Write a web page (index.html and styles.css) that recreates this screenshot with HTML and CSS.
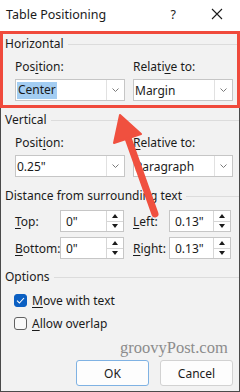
FILE: index.html
```html
<!DOCTYPE html>
<html lang="en">
<head>
  <meta charset="UTF-8">
  <meta name="viewport" content="width=device-width, initial-scale=1.0">
  <title>Table Positioning</title>
  <link rel="stylesheet" href="styles.css">
</head>
<body>
  <div class="dialog">
    <div class="titlebar">
      <span class="title">Table Positioning</span>
      <span class="help">?</span>
      <svg class="close" width="12" height="12" viewBox="0 0 12 12">
        <path d="M1 1 L11 11 M11 1 L1 11" stroke="#1b1b1b" stroke-width="1.1" fill="none"/>
      </svg>
    </div>

    <!-- highlighted section -->
    <div class="group hl">
      <div class="group-title">Horizontal</div>
      <div class="cols">
        <div class="field">
          <div class="label">Pos<u>i</u>tion:</div>
          <div class="combo"><span class="val"><span class="sel">Center</span></span><span class="drop"><svg width="7" height="4" viewBox="0 0 7 4"><path d="M0.5 0.5 L3.5 3.5 L6.5 0.5" stroke="#7a7a7a" fill="none"/></svg></span></div>
        </div>
        <div class="field">
          <div class="label">Relati<u>v</u>e to:</div>
          <div class="combo"><span class="val">Margin</span><span class="drop"><svg width="7" height="4" viewBox="0 0 7 4"><path d="M0.5 0.5 L3.5 3.5 L6.5 0.5" stroke="#7a7a7a" fill="none"/></svg></span></div>
        </div>
      </div>
    </div>

    <div class="group">
      <div class="group-title">Vertical</div>
      <div class="cols">
        <div class="field">
          <div class="label">Posit<u>i</u>on:</div>
          <div class="combo"><span class="val">0.25"</span><span class="drop"><svg width="7" height="4" viewBox="0 0 7 4"><path d="M0.5 0.5 L3.5 3.5 L6.5 0.5" stroke="#7a7a7a" fill="none"/></svg></span></div>
        </div>
        <div class="field">
          <div class="label"><u>R</u>elative to:</div>
          <div class="combo"><span class="val">Paragraph</span><span class="drop"><svg width="7" height="4" viewBox="0 0 7 4"><path d="M0.5 0.5 L3.5 3.5 L6.5 0.5" stroke="#7a7a7a" fill="none"/></svg></span></div>
        </div>
      </div>
    </div>

    <div class="group dist">
      <div class="group-title">Distance from surrounding text</div>
      <div class="spin-grid">
        <div class="spin-cell wide"><span class="slabel"><u>T</u>op:</span><div class="spin"><span class="val">0"</span><span class="arrows"><i class="up"></i><i class="down"></i></span></div></div>
        <div class="spin-cell"><span class="slabel"><u>L</u>eft:</span><div class="spin"><span class="val">0.13"</span><span class="arrows"><i class="up"></i><i class="down"></i></span></div></div>
        <div class="spin-cell wide"><span class="slabel"><u>B</u>ottom:</span><div class="spin"><span class="val">0"</span><span class="arrows"><i class="up"></i><i class="down"></i></span></div></div>
        <div class="spin-cell"><span class="slabel"><u>R</u>ight:</span><div class="spin"><span class="val">0.13"</span><span class="arrows"><i class="up"></i><i class="down"></i></span></div></div>
      </div>
    </div>

    <div class="group opts">
      <div class="group-title">Options</div>
      <div class="check-row">
        <span class="box checked"><svg width="9" height="7" viewBox="0 0 9 7"><path d="M1 3.6 L3.4 6 L8 1" stroke="#fff" stroke-width="1.1" fill="none"/></svg></span>
        <span><u>M</u>ove with text</span>
      </div>
      <div class="check-row">
        <span class="box"></span>
        <span><u>A</u>llow overlap</span>
      </div>
    </div>

    <div class="footer">
      <button class="btn default">OK</button>
      <button class="btn">Cancel</button>
    </div>

    <div class="watermark">groovyPost.com</div>

    <svg class="arrow" width="240" height="392" viewBox="0 0 240 392">
      <line x1="128" y1="138" x2="155" y2="214" stroke="#f0503f" stroke-width="7" stroke-linecap="round"/>
      <polygon points="120,115 141,134 114,143" fill="#f0503f" stroke="#f0503f" stroke-width="2" stroke-linejoin="round"/>
    </svg>
  </div>
</body>
</html>
```

FILE: styles.css
```css
html, body {
  margin: 0;
  padding: 0;
}
body {
  width: 240px;
  height: 392px;
  overflow: hidden;
  font-family: 'Noto Sans', 'Open Sans', sans-serif;
  font-size: 12px;
  color: #1b1b1b;
}
u {
  text-decoration-thickness: 1px;
  text-underline-offset: 2px;
}
.dialog {
  position: relative;
  box-sizing: border-box;
  width: 240px;
  height: 392px;
  background: #f2f2f2;
  border: 1px solid #4a4a4a;
  border-top: none;
  display: flex;
  flex-direction: column;
}
.titlebar {
  height: 31px;
  background: #fff;
  display: flex;
  align-items: center;
  padding: 0 0 3px 5px;
  box-sizing: border-box;
  font-size: 12.5px;
  margin: 0 -1px;
  border-left: 1px solid #fff;
}
.title {
  flex: 1;
}
.help {
  margin-right: 35px;
}
.close {
  margin-right: 17px;
}
.group {
  padding: 0 0 0 4px;
  margin-top: 4px;
}
.group-title {
  display: flex;
  align-items: center;
  line-height: 16px;
  height: 16px;
}
.group-title::after {
  content: '';
  flex: 1;
  height: 1px;
  background: #dcdcdc;
  margin-left: 4px;
}
.hl {
  margin: 0 -1px;
  border: 3px solid #f04a3c;
  padding: 2px 0 4px 2px;
}
.cols {
  display: grid;
  grid-template-columns: 110px 100px;
  column-gap: 8px;
  padding-left: 10px;
  margin-top: 7px;
}
.label {
  line-height: 16px;
  margin-bottom: 4px;
}
.combo, .spin {
  height: 22px;
  box-sizing: border-box;
  background: #fff;
  border: 1px solid #c6c6c6;
  display: flex;
  align-items: stretch;
}
.val {
  flex: 1;
  display: flex;
  align-items: center;
  padding-left: 2px;
}
.combo .val {
  padding-left: 1px;
}
.sel {
  background: #a3cdf2;
  padding: 1px 1px 2px 1px;
  line-height: 14px;
}
.drop {
  width: 17px;
  border-left: 1px solid #e1e1e1;
  display: flex;
  align-items: center;
  justify-content: center;
}
.dist {
  margin-top: 11px;
}
.spin-grid {
  display: grid;
  grid-template-columns: 110px 100px;
  column-gap: 8px;
  row-gap: 5px;
  padding-left: 10px;
  margin-top: 6px;
}
.spin-cell {
  display: flex;
  align-items: center;
}
.slabel {
  width: 36px;
}
.spin-cell.wide .slabel {
  width: 45px;
}
.spin-cell .spin {
  width: 64px;
}
.spin-cell:not(.wide) .spin {
  width: 62px;
}
.spin .val {
  padding-left: 5px;
}
.arrows {
  width: 16px;
  border-left: 1px solid #d6d6d6;
  display: flex;
  flex-direction: column;
}
.arrows i {
  flex: 1;
  display: flex;
  align-items: center;
  justify-content: center;
}
.arrows i.up {
  border-bottom: 1px solid #d6d6d6;
}
.arrows i.up::before {
  content: '';
  border-left: 3px solid transparent;
  border-right: 3px solid transparent;
  border-bottom: 4px solid #1b1b1b;
}
.arrows i.down::before {
  content: '';
  border-left: 3px solid transparent;
  border-right: 3px solid transparent;
  border-top: 4px solid #1b1b1b;
}
.opts {
  margin-top: 10px;
}
.check-row {
  display: flex;
  align-items: center;
  gap: 5px;
  height: 20px;
  padding-left: 9px;
}
.opts .group-title {
  margin-bottom: 5px;
}
.check-row + .check-row {
  margin-top: 3px;
}
.box {
  width: 13px;
  height: 13px;
  box-sizing: border-box;
  border: 1px solid #616161;
  border-radius: 3px;
  background: #f9f9f9;
  display: flex;
  align-items: center;
  justify-content: center;
}
.box.checked {
  background: #0b5fc2;
  border-color: #0b5fc2;
}
.footer {
  margin-top: auto;
  display: flex;
  justify-content: flex-end;
  gap: 11px;
  padding: 0 6px 5px 0;
}
.btn {
  width: 73px;
  height: 26px;
  font-family: 'Noto Sans', 'Open Sans', sans-serif;
  font-size: 12px;
  color: #1b1b1b;
  background: #fdfdfd;
  border: 1px solid #d2d2d2;
  border-radius: 3px;
  padding: 0;
}
.btn.default {
  border-color: #7fb2e3;
}
.watermark {
  position: absolute;
  left: 119px;
  top: 338px;
  font-family: 'Liberation Serif', serif;
  font-size: 16.5px;
  color: #8c8c8c;
}
.arrow {
  position: absolute;
  left: -1px;
  top: 0;
  pointer-events: none;
}
```
